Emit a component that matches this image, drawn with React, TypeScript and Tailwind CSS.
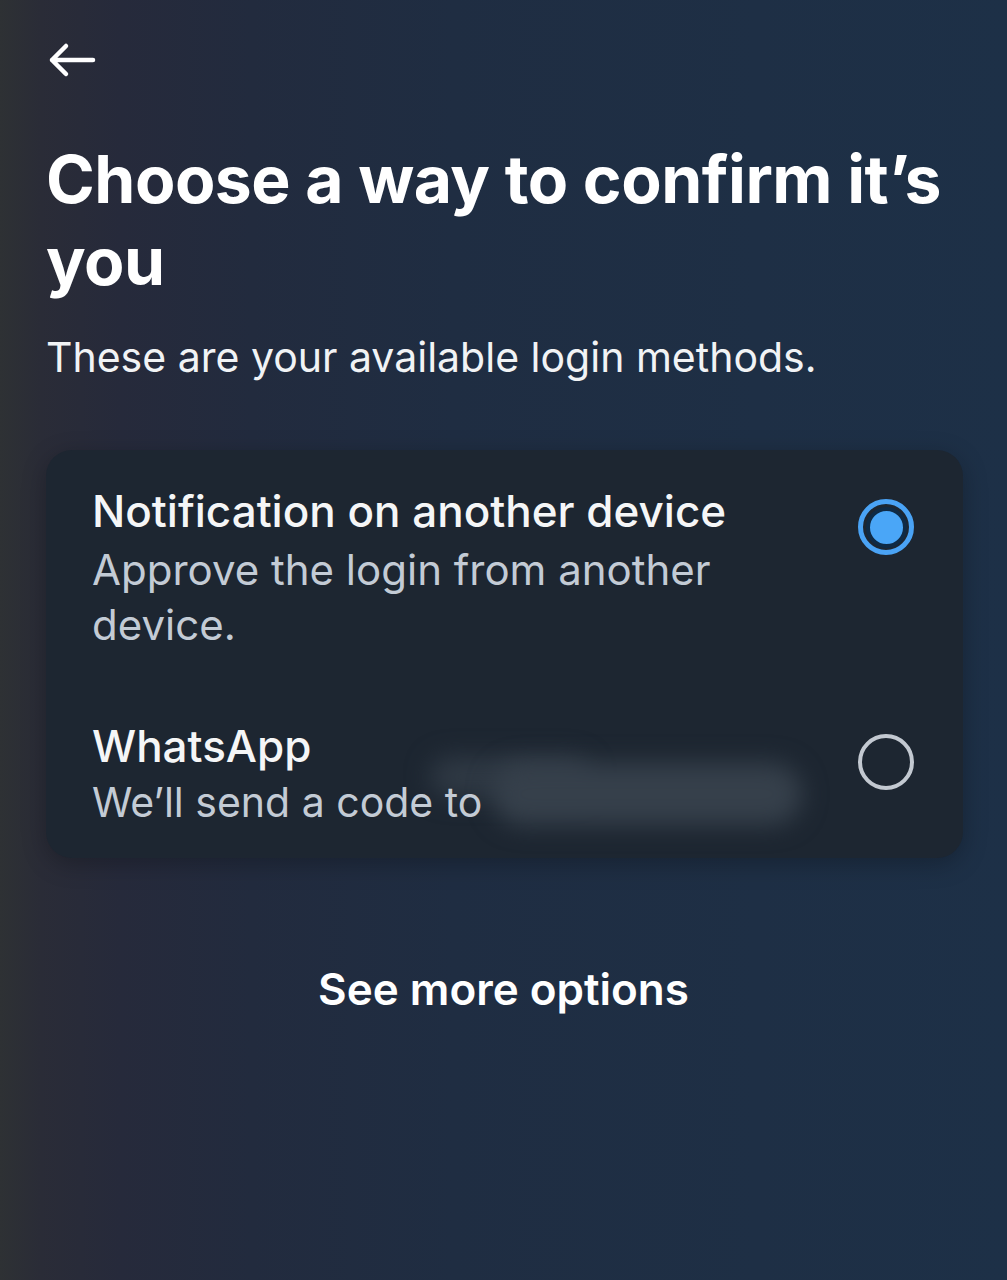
import React from "react";

export default function App() {
  return (
    <div
      className="relative h-[1280px] w-full overflow-hidden bg-[linear-gradient(90deg,#2e3134_0%,#2a2c37_4%,#262a3b_12%,#222b3e_25%,#1f2d42_45%,#1e2f45_75%,#1d3047_100%)] text-white"
      style={{ fontFamily: "Inter, 'Noto Sans', sans-serif" }}
    >
      <div className="flex flex-col px-[46px] pt-[40px]">
        <button className="flex h-[40px] w-[50px] items-center text-white">
          <svg width="50" height="40" viewBox="0 0 50 40" fill="none">
            <path d="M47 20H6M20 6L6 20L20 34" stroke="white" strokeWidth="4.5" strokeLinecap="round" strokeLinejoin="round" />
          </svg>
        </button>

        <h1 className="mt-[58px] w-[905px] text-[66px] font-bold leading-[82px] tracking-[-0.5px] text-white">
          Choose a way to confirm it’s you
        </h1>
        <p className="mt-[29px] text-[41px] leading-[52px] text-[#f1f3f5]">
          These are your available login methods.
        </p>

        <div className="mt-[67px] flex w-[917px] flex-col rounded-[26px] bg-[#1d2631] pb-[28px] pl-[46px] pr-[49px] pt-[34px] shadow-[0_6px_24px_rgba(0,0,0,0.25)]">
          <div className="flex items-start justify-between">
            <div className="flex w-[680px] flex-col">
              <div className="text-[44px] font-medium leading-[54px] text-[#f5f6f7]">Notification on another device</div>
              <div className="mt-[4px] text-[42px] leading-[55px] text-[#c3cbd5]">Approve the login from another device.</div>
            </div>
            <div className="mt-[15px] flex h-[56px] w-[56px] items-center justify-center rounded-full border-[5px] border-[#4aa3f5]">
              <div className="box-content h-[33px] w-[33px] rounded-full border-[4px] border-[#0f2a45] bg-[#4aa6f7]" />
            </div>
          </div>

          <div className="mt-[67px] flex items-start justify-between">
            <div className="flex flex-col">
              <div className="text-[44px] font-medium leading-[54px] text-[#f5f6f7]">WhatsApp</div>
              <div className="relative mt-[2px] text-[41px] leading-[55px] text-[#c3cbd5]">
                <span className="absolute left-[338px] top-[-18px] h-[40px] w-[160px] rounded-[30px] bg-[#2f3944] blur-md" />
                <span className="absolute left-[400px] top-[-12px] h-[62px] w-[310px] rounded-[36px] bg-[#36404b] blur-md" />
                <span className="relative">We’ll send a code to</span>
              </div>
            </div>
            <div className="mt-[15px] h-[56px] w-[56px] rounded-full border-[4px] border-[#c3c9d1]" />
          </div>
        </div>

        <div className="mt-[104px] flex justify-center">
          <span className="text-[44px] font-semibold leading-[54px] text-white">See more options</span>
        </div>
      </div>
    </div>
  );
}
